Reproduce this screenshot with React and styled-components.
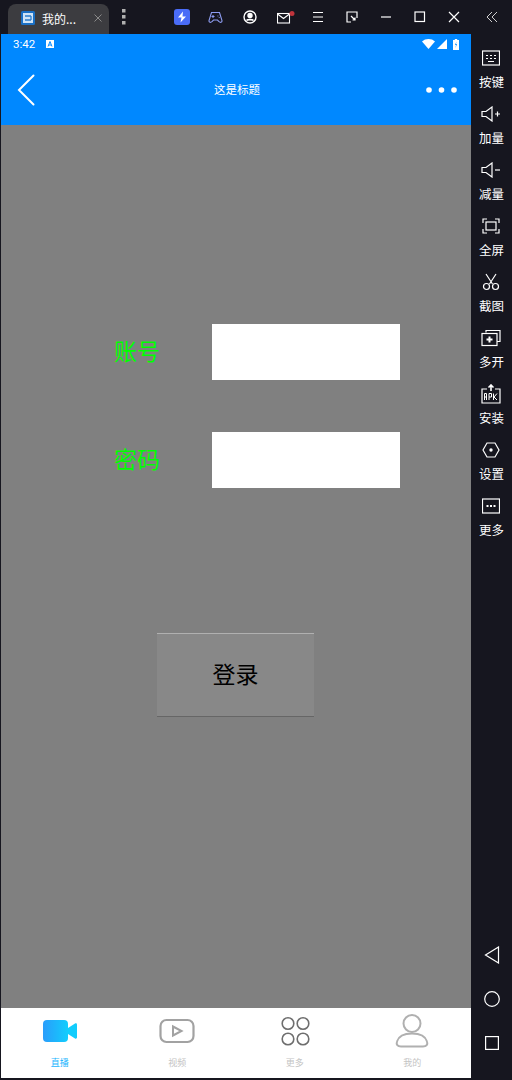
import React from 'react';
import styled, { createGlobalStyle } from 'styled-components';

const GlobalStyle = createGlobalStyle`
  html, body {
    margin: 0;
    padding: 0;
    background: #16161f;
  }
  body {
    font-family: "Noto Sans CJK SC", "Liberation Sans", sans-serif;
  }
`;

const Page = styled.div`
  width: 512px;
  height: 1080px;
  display: flex;
  flex-direction: column;
  overflow: hidden;
  background: #16161f;
`;

const TitleBar = styled.div`
  height: 34px;
  display: flex;
  align-items: flex-end;
  padding-left: 8px;
`;

const Tab = styled.div`
  width: 101px;
  height: 30px;
  box-sizing: border-box;
  display: flex;
  align-items: center;
  padding: 0 6px 2px 13px;
  background: #3c3c40;
  border-radius: 8px 8px 0 0;
  color: #fff;
  font-size: 12px;
`;

const TabName = styled.span`
  margin-left: 7px;
  flex: 1;
`;

const WinIcons = styled.div`
  height: 34px;
  display: flex;
  align-items: center;
  margin-left: 6px;
`;

const WinBtn = styled.div`
  width: ${(p) => p.$w || 34}px;
  height: 34px;
  margin-left: ${(p) => p.$gap || 0}px;
  display: flex;
  align-items: center;
  justify-content: center;
`;

const Main = styled.div`
  flex: 1;
  display: flex;
`;

const Device = styled.div`
  width: 470px;
  margin-left: 1px;
  height: 1044px;
  display: flex;
  flex-direction: column;
  background: #808080;
`;

const Header = styled.div`
  height: 91px;
  background: #0088ff;
  display: flex;
  flex-direction: column;
`;

const StatusBar = styled.div`
  height: 20px;
  display: flex;
  align-items: center;
  padding: 0 12px;
  color: #fff;
  font-family: "Roboto", "Liberation Sans", sans-serif;
  font-size: 11.5px;
`;

const StatusRight = styled.div`
  margin-left: auto;
  display: flex;
  align-items: center;
  gap: 2px;
`;

const NavBar = styled.div`
  flex: 1;
  display: flex;
  align-items: center;
  justify-content: space-between;
  padding: 0 14px 0 16px;
`;

const NavTitle = styled.div`
  flex: 1;
  text-align: center;
  color: #fff;
  font-size: 11.5px;
  padding: 0 0 2px 13px;
`;

const Content = styled.div`
  flex: 1;
  display: flex;
  flex-direction: column;
  padding: 199px 0 0 113px;
  gap: 52px;
`;

const Row = styled.div`
  display: flex;
  align-items: center;
`;

const Label = styled.label`
  width: 98px;
  color: #00ff00;
  font-size: 23px;
  line-height: 30px;
  padding-bottom: 4px;
`;

const Input = styled.div`
  width: 188px;
  height: 56px;
  background: #fff;
`;

const LoginButton = styled.button`
  width: 157px;
  height: 84px;
  margin: 93px 0 0 43px;
  background: #888888;
  border: none;
  border-top: 1px solid #b0b0b0;
  border-bottom: 1px solid #666666;
  color: #000;
  font-family: inherit;
  font-size: 23px;
  padding: 0 0 4px 0;
`;

const TabBar = styled.div`
  height: 70px;
  background: #fff;
  display: grid;
  grid-template-columns: repeat(4, 1fr);
`;

const TabItem = styled.div`
  display: flex;
  flex-direction: column;
  align-items: center;
  padding-top: 3px;
`;

const TabIcon = styled.div`
  height: 40px;
  display: flex;
  align-items: center;
  justify-content: center;
`;

const TabText = styled.div`
  margin-top: 5px;
  font-size: 9px;
  line-height: 14px;
  color: ${(p) => (p.$active ? '#19b5fe' : '#c4c4c4')};
`;

const Sidebar = styled.div`
  flex: 1;
  display: flex;
  flex-direction: column;
  align-items: center;
  padding-top: 10px;
`;

const SideItem = styled.div`
  height: 56px;
  display: flex;
  flex-direction: column;
  align-items: center;
  color: #fff;
  font-size: 12.5px;
  line-height: 16px;
`;

const SideIcon = styled.div`
  height: 28px;
  margin-bottom: 2px;
  display: flex;
  align-items: center;
  justify-content: center;
`;

const SideNav = styled.div`
  margin-top: auto;
  margin-bottom: 15px;
  display: flex;
  flex-direction: column;
`;

const NavKey = styled.div`
  height: 44px;
  display: flex;
  align-items: center;
  justify-content: center;
`;

const Ico = ({ w = 20, h = 20, children, stroke = '#fff', sw = 1.2 }) => (
  <svg width={w} height={h} viewBox={`0 0 ${w} ${h}`} fill="none" stroke={stroke} strokeWidth={sw}>
    {children}
  </svg>
);

const sideItems = [
  ['按键', <Ico w={18} h={16}><rect x=".5" y="1" width="17" height="14" /><path d="M4 5.5h2M8 5.5h2M12 5.5h2M4 8.5h2M8 8.5h2M12 8.5h2M6 11.5h6" /></Ico>],
  ['加量', <Ico w={20} h={16}><path d="M1 5.5h4L11 1v14L5 10.5H1z" /><path d="M14 8h5M16.5 5.5v5" /></Ico>],
  ['减量', <Ico w={20} h={16}><path d="M1 5.5h4L11 1v14L5 10.5H1z" /><path d="M14 8h5" /></Ico>],
  ['全屏', <Ico w={18} h={16}><path d="M1 5V1h4M13 1h4v4M17 11v4h-4M5 15H1v-4" /><rect x="4" y="4" width="10" height="8" /></Ico>],
  ['截图', <Ico w={18} h={18}><path d="M4 1l6.5 10M14 1L7.5 11" /><circle cx="4.5" cy="13.5" r="3" /><circle cx="13.5" cy="13.5" r="3" /></Ico>],
  ['多开', <Ico w={20} h={18}><path d="M5 3.5V1.5h14v11h-3" /><rect x="1" y="4.5" width="15" height="12" /><path d="M8.5 7.5v6M5.5 10.5h6" strokeWidth="2" /></Ico>],
  ['安装', <Ico w={20} h={20}><path d="M6 5H1v14h18V5h-5" /><path d="M10 7V1M7.5 3.5L10 1l2.5 2.5" strokeWidth="1.6" /><path d="M3.5 16V9.5h2V16M3.5 13h2M8 16V9.5h2.5V13H8M12.5 9.5V16M16 9.5L13 13l3 3" strokeWidth="1" /></Ico>],
  ['设置', <Ico w={18} h={16}><path d="M5 1h8l4 7-4 7H5L1 8z" /><circle cx="9" cy="8" r="1.7" fill="#fff" stroke="none" /></Ico>],
  ['更多', <Ico w={18} h={16}><rect x=".5" y="1" width="17" height="14" /><path d="M4.5 8h2M8 8h2M11.5 8h2" strokeWidth="1.8" /></Ico>],
];

const App = () => {
  return (
    <Page>
      <GlobalStyle />
      <TitleBar>
        <Tab>
          <svg width="14" height="14" viewBox="0 0 14 14">
            <rect width="14" height="14" rx="1.5" fill="#1a6fc4" />
            <rect x="2" y="2" width="10" height="10" fill="#cfe3f6" />
            <path d="M4 5h6M4 9h6M10 5v4" stroke="#2a7ccc" strokeWidth="1.3" fill="none" />
          </svg>
          <TabName>我的...</TabName>
          <Ico w={10} h={10} stroke="#8a8a8a" sw={1}><path d="M1.5 1.5l7 7M8.5 1.5l-7 7" /></Ico>
        </Tab>
        <WinIcons>
          <WinBtn $w={18}>
            <svg width="4" height="16" viewBox="0 0 4 16" fill="#b0b0b0">
              <rect width="3.5" height="3.5" /><rect y="6" width="3.5" height="3.5" /><rect y="12" width="3.5" height="3.5" />
            </svg>
          </WinBtn>
          <WinBtn $w={40} $gap={29}>
            <svg width="16" height="16" viewBox="0 0 16 16">
              <rect width="16" height="16" rx="3" fill="#4a6cf7" />
              <path d="M9 2.5L4 8.5h3.5l-1 5L12 7.5H8.500z" fill="#fff" />
            </svg>
          </WinBtn>
          <WinBtn $w={27}>
            <Ico w={15} h={13} stroke="#8d9cf0" sw={1.1}>
              <path d="M3.5 1.5h8L14 9.5c.3 2-1.800 2.500-3 1L9.500 9h-4L4 10.500c-1.200 1.500-3.300 1-3-1z" />
              <path d="M3.5 5.5h3M5 4v3M9.500 5h.8M10.800 6.500h.8" />
            </Ico>
          </WinBtn>
          <WinBtn $w={42}>
            <Ico w={14} h={14} sw={1.4}>
              <circle cx="7" cy="7" r="6" />
              <circle cx="7" cy="5.5" r="2" fill="#fff" />
              <path d="M3.5 10.5c1-1.500 6-1.500 7 0" fill="#fff" />
            </Ico>
          </WinBtn>
          <WinBtn $w={30}>
            <svg width="18" height="13" viewBox="0 0 18 13" fill="none" stroke="#fff" strokeWidth="1.1">
              <rect x=".5" y="2.5" width="12" height="9.5" />
              <path d="M.5 3l6 4.500 6-4.500" />
              <circle cx="15" cy="2.5" r="2.5" fill="#c0343c" stroke="none" />
            </svg>
          </WinBtn>
          <WinBtn>
            <Ico w={12} h={12}><path d="M1 1.5h10M1 6h10M1 10.500h10" /></Ico>
          </WinBtn>
          <WinBtn>
            <Ico w={12} h={12}><path d="M5 11H1V1h10v6M5 5l4 4M9 6.500V9H6.500" /></Ico>
          </WinBtn>
          <WinBtn>
            <Ico w={12} h={12}><path d="M1 6h10" /></Ico>
          </WinBtn>
          <WinBtn>
            <Ico w={12} h={12}><rect x="1" y="1" width="9.5" height="9.5" /></Ico>
          </WinBtn>
          <WinBtn>
            <Ico w={12} h={12}><path d="M1 1l10 10M11 1L1 11" /></Ico>
          </WinBtn>
          <WinBtn $w={40} $gap={1}>
            <Ico w={12} h={12} stroke="#cfcfcf" sw={1}><path d="M6 1L1 6l5 5M11 1L6 6l5 5" /></Ico>
          </WinBtn>
        </WinIcons>
      </TitleBar>

      <Main>
        <Device>
          <Header>
            <StatusBar>
              3:42
              <svg width="8" height="8" viewBox="0 0 8 8" style={{ marginLeft: 11 }}>
                <rect width="8" height="8" fill="#fff" />
                <path d="M2 6.5L4 1.5l2 5M3 5h2" stroke="#0088ff" strokeWidth="1" fill="none" />
              </svg>
              <StatusRight>
                <svg width="13" height="10" viewBox="0 0 13 10" fill="#fff"><path d="M0 2.500C3.500-.8 9.500-.8 13 2.500L6.500 10z" /></svg>
                <svg width="10" height="10" viewBox="0 0 10 10" fill="#fff"><path d="M10 0v10H0z" /></svg>
                <svg width="6" height="11" viewBox="0 0 6 11" style={{ marginLeft: 4 }}>
                  <path d="M1.800 0h2.400v1H6v10H0V1h1.800z" fill="#fff" />
                  <path d="M3.500 2.500L2 6h1l-.5 3L4 5H3z" fill="#0088ff" />
                </svg>
              </StatusRight>
            </StatusBar>
            <NavBar>
              <svg width="18" height="32" viewBox="0 0 18 32" fill="none" stroke="#fff" strokeWidth="2" strokeLinecap="round">
                <path d="M16.500 1.500L2 16l14.500 14.500" />
              </svg>
              <NavTitle>这是标题</NavTitle>
              <svg width="31" height="6" viewBox="0 0 31 6" fill="#fff">
                <circle cx="3" cy="3" r="2.8" /><circle cx="15.500" cy="3" r="2.8" /><circle cx="28" cy="3" r="2.8" />
              </svg>
            </NavBar>
          </Header>

          <Content>
            <Row>
              <Label>账号</Label>
              <Input />
            </Row>
            <Row>
              <Label>密码</Label>
              <Input />
            </Row>
            <LoginButton>登录</LoginButton>
          </Content>

          <TabBar>
            <TabItem>
              <TabIcon>
                <svg width="36" height="24" viewBox="0 0 36 24">
                  <defs>
                    <linearGradient id="cam" x1="0" y1="0" x2="1" y2="0">
                      <stop offset="0" stopColor="#2a9dfb" />
                      <stop offset="1" stopColor="#12cdfd" />
                    </linearGradient>
                  </defs>
                  <rect x="1" y="1" width="25" height="22" rx="4" fill="url(#cam)" />
                  <path d="M26 9l7-4.500c1-.5 2 0 2 1v13c0 1-1 1.500-2 1L26 15z" fill="#12cdfd" />
                </svg>
              </TabIcon>
              <TabText $active>直播</TabText>
            </TabItem>
            <TabItem>
              <TabIcon>
                <svg width="36" height="26" viewBox="0 0 36 26" fill="none" stroke="#a2a2a2" strokeWidth="2.2">
                  <rect x="1.5" y="2" width="33" height="22" rx="6" />
                  <path d="M14 8.500L22.500 13 14 17.500z" strokeWidth="2" />
                </svg>
              </TabIcon>
              <TabText>视频</TabText>
            </TabItem>
            <TabItem>
              <TabIcon>
                <svg width="30" height="30" viewBox="0 0 30 30" fill="none" stroke="#6e6e6e" strokeWidth="1.6">
                  <circle cx="8" cy="7.5" r="5.8" /><circle cx="23" cy="7.5" r="5.8" />
                  <circle cx="8" cy="23" r="5.8" /><circle cx="23" cy="23" r="5.8" />
                </svg>
              </TabIcon>
              <TabText>更多</TabText>
            </TabItem>
            <TabItem>
              <TabIcon>
                <svg width="34" height="36" viewBox="0 0 34 36" fill="none" stroke="#b0b0b0" strokeWidth="2">
                  <circle cx="17" cy="10.5" r="8.5" />
                  <path d="M6 33.500c-3.500 0-5-2-4-5 1.500-5 7-8 15-8s13.500 3 15 8c1 3-.5 5-4 5z" />
                </svg>
              </TabIcon>
              <TabText>我的</TabText>
            </TabItem>
          </TabBar>
        </Device>

        <Sidebar>
          {sideItems.map(([name, icon]) => (
            <SideItem key={name}>
              <SideIcon>{icon}</SideIcon>
              {name}
            </SideItem>
          ))}
          <SideNav>
            <NavKey>
              <Ico w={16} h={18}><path d="M14.500 1v16L1.500 9z" /></Ico>
            </NavKey>
            <NavKey>
              <Ico w={16} h={16}><circle cx="8" cy="8" r="7.3" /></Ico>
            </NavKey>
            <NavKey>
              <Ico w={14} h={14}><rect x=".6" y=".6" width="12.8" height="12.8" /></Ico>
            </NavKey>
          </SideNav>
        </Sidebar>
      </Main>
    </Page>
  );
};

export default App;
